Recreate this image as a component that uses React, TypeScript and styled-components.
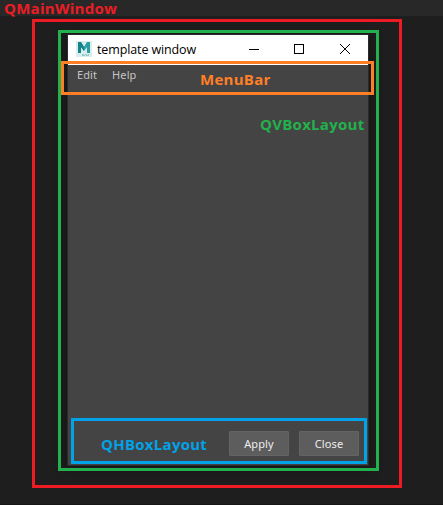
import React from "react";
import styled, { createGlobalStyle } from "styled-components";

const GlobalStyle = createGlobalStyle`
  * { box-sizing: border-box; }
  body { margin: 0; background: #1e1e1e; overflow: hidden; }
`;

const Page = styled.main`
  position: relative;
  width: 443px;
  height: 505px;
  background: #1e1e1e;
  border-bottom: 1px solid #161616;
  overflow: hidden;
`;

const TopStrip = styled.header`
  height: 16px;
  margin-bottom: 19px;
  background: #282828;
`;

const Window = styled.section`
  display: flex;
  flex-direction: column;
  width: 300px;
  height: 430px;
  margin-left: 68px;
  background: #444444;
  box-shadow: 0 0 0 1px #2a2a2a, 0 2px 14px rgba(0, 0, 0, 0.45);
`;

const TitleBar = styled.div`
  display: flex;
  align-items: center;
  height: 30px;
  padding: 0 0 2px 8px;
  background: #ffffff;
`;

const Title = styled.span`
  flex: 1;
  margin-left: 5px;
  padding-top: 1px;
  font: 12.5px/16px "Open Sans", sans-serif;
  letter-spacing: -0.12px;
  color: #000000;
  white-space: nowrap;
`;

const WindowControl = styled.span`
  display: flex;
  align-items: center;
  justify-content: center;
  width: 46px;
  height: 28px;
`;

const MenuBar = styled.nav`
  display: flex;
  gap: 15px;
  padding: 2px 9px;
  font: 11px/16px "Noto Sans", sans-serif;
  letter-spacing: 0.1px;
  color: #c4c4c4;
`;

const Content = styled.div`
  flex: 1;
`;

const ButtonRow = styled.div`
  display: flex;
  justify-content: flex-end;
  gap: 10px;
  padding: 0 9px 9px;
`;

const PushButton = styled.button`
  width: 60px;
  height: 25px;
  padding: 0;
  border: 1px solid #646464;
  border-radius: 1px;
  background: #5d5d5d;
  color: #eeeeee;
  font: 11px/21px "Noto Sans", sans-serif;
  letter-spacing: 0.1px;
`;

const Outline = styled.div<{ $x: number; $y: number; $w: number; $h: number; $color: string }>`
  position: absolute;
  left: ${(p) => p.$x}px;
  top: ${(p) => p.$y}px;
  width: ${(p) => p.$w}px;
  height: ${(p) => p.$h}px;
  border: 3px solid ${(p) => p.$color};
`;

const Label = styled.span<{ $x: number; $y: number; $color: string }>`
  position: absolute;
  left: ${(p) => p.$x}px;
  top: ${(p) => p.$y}px;
  color: ${(p) => p.$color};
  font: 700 15px/16px "Open Sans", sans-serif;
  letter-spacing: 0.27px;
  white-space: nowrap;
`;

const RED = "#ed1c24";
const GREEN = "#22b14c";
const ORANGE = "#ff7f27";
const BLUE = "#00a2e8";

const AppIcon = () => (
  <svg width="16" height="16" viewBox="0 0 16 16">
    <rect width="16" height="16" fill="#d9edef" />
    <path d="M2 1h3l3 5 3-5h3v11h-3V6L8 10 5 6v6H2z" fill="#2a9ea3" />
    <path d="M2 1h3l3 5v4L5 6v6H2z" fill="#15838a" />
    <path d="M6 13.5h2m1 0h2m1 0h1M6 14.5h3m1 0h3" stroke="#75b9bd" strokeWidth=".7" />
  </svg>
);

export default function App() {
  return (
    <>
      <GlobalStyle />
      <Page>
        <TopStrip />
        <Window>
          <TitleBar>
            <AppIcon />
            <Title>template window</Title>
            <WindowControl>
              <svg width="12" height="10" viewBox="0 0 12 10" shapeRendering="crispEdges">
                <path d="M2 5.5h10" stroke="#000" />
              </svg>
            </WindowControl>
            <WindowControl>
              <svg width="10" height="10" viewBox="0 0 10 10" shapeRendering="crispEdges">
                <path d="M.5.5h9v9h-9z" stroke="#000" fill="none" />
              </svg>
            </WindowControl>
            <WindowControl>
              <svg width="10" height="10" viewBox="0 0 10 10">
                <path d="M0 0l10 10M10 0L0 10" stroke="#000" />
              </svg>
            </WindowControl>
          </TitleBar>
          <MenuBar>
            <span>Edit</span>
            <span>Help</span>
          </MenuBar>
          <Content />
          <ButtonRow>
            <PushButton>Apply</PushButton>
            <PushButton>Close</PushButton>
          </ButtonRow>
        </Window>
        <Outline $x={32} $y={19} $w={370} $h={469} $color={RED} />
        <Outline $x={58} $y={30} $w={321} $h={441} $color={GREEN} />
        <Outline $x={61} $y={61} $w={313} $h={34} $color={ORANGE} />
        <Outline $x={71} $y={418} $w={296} $h={46} $color={BLUE} />
        <Label $x={4} $y={0} $color={RED}>QMainWindow</Label>
        <Label $x={200} $y={71} $color={ORANGE}>MenuBar</Label>
        <Label $x={260} $y={116} $color={GREEN}>QVBoxLayout</Label>
        <Label $x={101} $y={436} $color={BLUE}>QHBoxLayout</Label>
      </Page>
    </>
  );
}
